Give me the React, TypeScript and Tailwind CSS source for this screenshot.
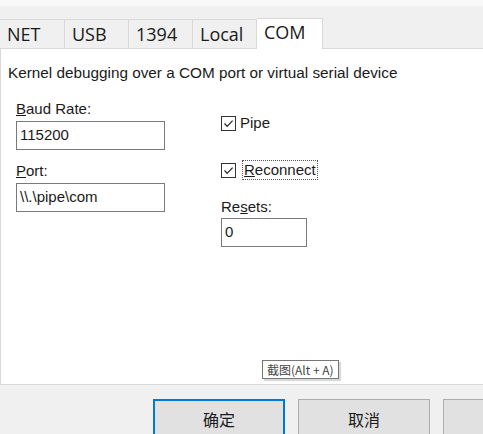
import React from "react";

const sans = "font-['Liberation_Sans',Arial,sans-serif]";

function Check({ label, focus }: { label: React.ReactNode; focus?: boolean }) {
  return (
    <div className={`flex items-center ${focus ? "gap-[7px]" : "gap-[3px]"}`}>
      <div className="w-[15px] h-[15px] border border-[#333] bg-white flex items-center justify-center">
        <svg width="11" height="11" viewBox="0 0 11 11" fill="none">
          <path d="M1.5 5.5 L4.2 8.3 L9.6 2.6" stroke="#222" strokeWidth="1.2" />
        </svg>
      </div>
      <span className={`text-[15px] leading-[18px] px-[1px] ${focus ? "outline outline-1 outline-dotted outline-[#555]" : ""}`}>
        {label}
      </span>
    </div>
  );
}

function Field({ value, w }: { value: string; w: string }) {
  return (
    <div className={`${w} h-[29px] border border-[#7a7a7a] bg-white px-[3px] flex items-center text-[15px]`}>
      {value}
    </div>
  );
}

export default function App() {
  const tabs = ["NET", "USB", "1394", "Local"];
  return (
    <div className={`w-[483px] h-[434px] overflow-hidden bg-[#f0f0f0] flex flex-col relative text-[#1a1a1a] ${sans}`}>
      <div className="h-[6px] bg-[#f8f8f8] shrink-0" />
      {/* Tabs */}
      <div className="mt-[12px] flex items-end h-[30px] shrink-0 font-['Open_Sans','Noto_Sans',sans-serif] text-[18px] relative z-10">
        {tabs.map((t, i) => (
          <div
            key={t}
            className={`h-[29px] border-t border-r border-[#d9d9d9] bg-[#f0f0f0] flex items-center pl-[7px] ${i === 0 ? "w-[65px]" : "w-[64px]"}`}
          >
            {t}
          </div>
        ))}
        <div className="w-[66px] h-[31px] -mb-px border-t border-r border-[#d9d9d9] bg-white flex items-center pl-[7px] pb-[3px]">
          COM
        </div>
      </div>
      {/* Panel */}
      <div className="w-[500px] h-[337px] shrink-0 border border-[#d9d9d9] bg-white pl-[7px] pt-[15px]">
        <div className="text-[15.3px] leading-[17px]">Kernel debugging over a COM port or virtual serial device</div>
        <div className="flex mt-[19px]">
          <div className="w-[213px] pl-[8px] flex flex-col">
            <div className="text-[15px] leading-[17px]"><u>B</u>aud Rate:</div>
            <div className="mt-[4px]"><Field value="115200" w="w-[149px]" /></div>
            <div className="mt-[12px] text-[15px] leading-[17px]"><u>P</u>ort:</div>
            <div className="mt-[4px]"><Field value="\\.\pipe\com" w="w-[149px]" /></div>
          </div>
          <div className="flex flex-col pt-[14px]">
            <Check label="Pipe" />
            <div className="mt-[29px]">
              <Check label={<><u>R</u>econnect</>} focus />
            </div>
            <div className="mt-[19px] text-[15px] leading-[17px]">Re<u>s</u>ets:</div>
            <div className="mt-[3px]"><Field value="0" w="w-[86px]" /></div>
          </div>
        </div>
      </div>
      {/* Buttons */}
      <div className="flex pl-[153px] pt-[14px] gap-[13px] font-['Noto_Sans_CJK_SC',sans-serif] text-[16px]">
        <div className="w-[132px] h-[40px] shrink-0 border-2 border-[#0078d7] bg-[#e1e1e1] flex items-start justify-center pt-[6px]">确定</div>
        <div className="w-[132px] h-[40px] shrink-0 border border-[#adadad] bg-[#e1e1e1] flex items-start justify-center pt-[7px]">取消</div>
        <div className="w-[132px] h-[40px] shrink-0 border border-[#adadad] bg-[#e1e1e1]" />
      </div>
      {/* Tooltip */}
      <div className="absolute left-[262px] top-[360px] h-[19px] px-[4px] border border-[#767676] bg-white text-[12px] leading-[17px] text-[#444] shadow-[2px_2px_1px_rgba(0,0,0,0.15)] font-['Noto_Sans_CJK_SC',sans-serif]">
        截图(Alt + A)
      </div>
    </div>
  );
}
